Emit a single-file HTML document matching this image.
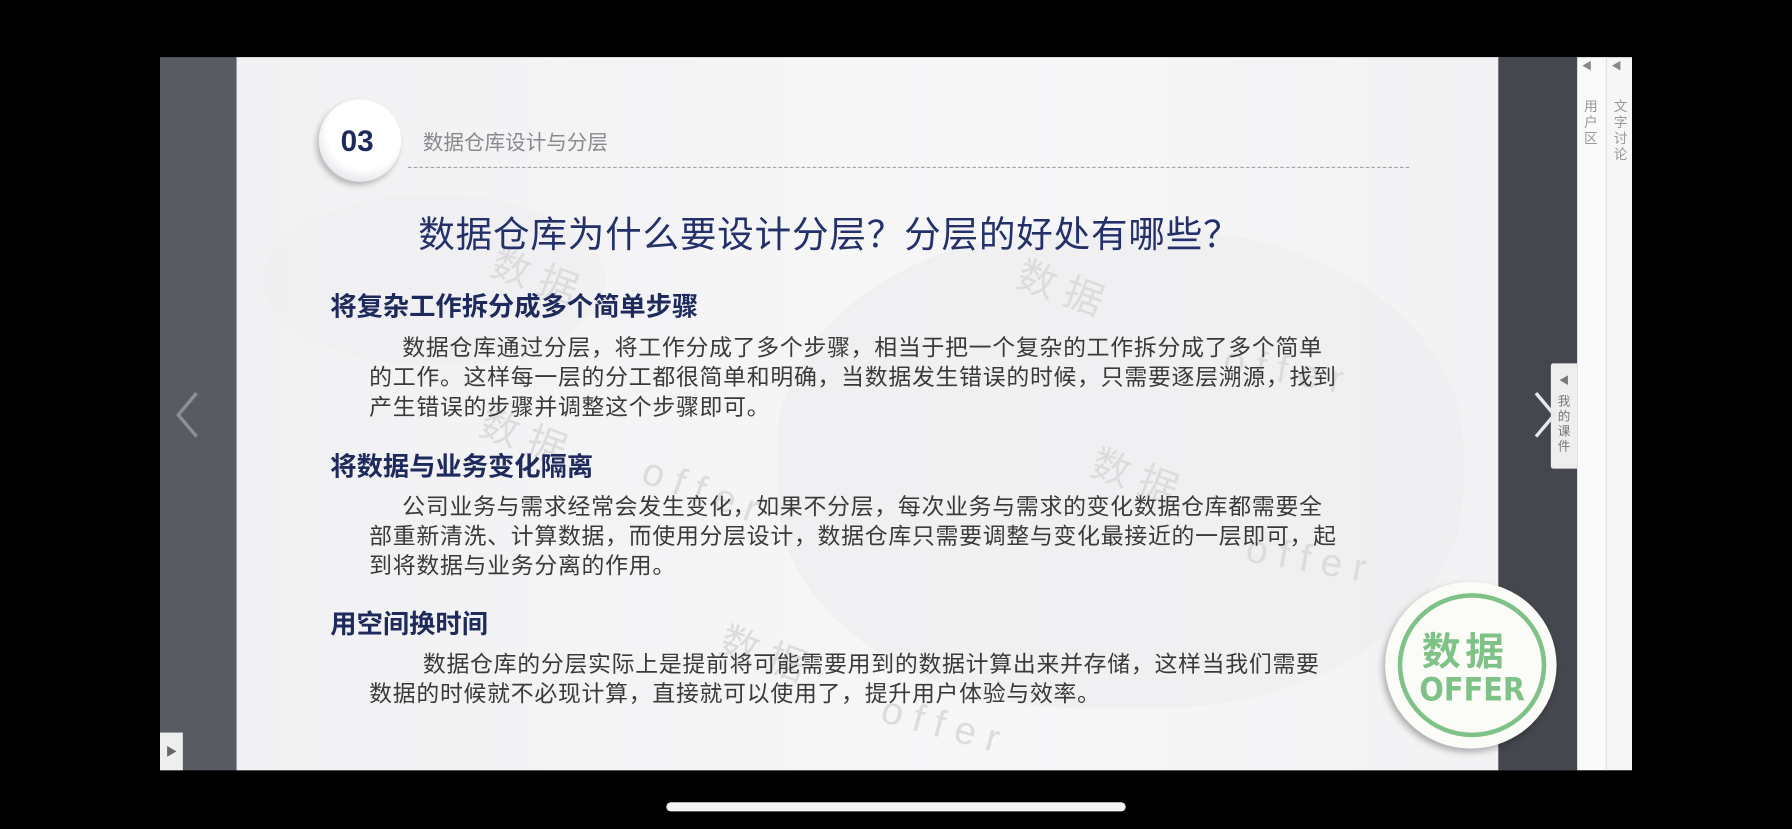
<!DOCTYPE html>
<html><head><meta charset="utf-8"><style>
html,body{margin:0;padding:0;background:#000;width:1792px;height:828px;overflow:hidden}
#w{position:absolute;left:0;top:0;width:1568px;height:725px;transform:scale(1.142857);transform-origin:0 0;font-family:"Liberation Sans","Noto Sans CJK SC",sans-serif}
.a{position:absolute;white-space:nowrap}
.b{font-size:20px;color:#3a3a3a;line-height:26px;letter-spacing:0.65px}
.h{font-size:23px;font-weight:bold;color:#1f2a5c}
.wm{position:absolute;color:#dcdcde;font-size:34px;white-space:nowrap}
</style></head><body><div id="w">
<div class="a" style="left:140px;top:50px;width:1240px;height:624px;background:#595b63"></div>
<div class="a" style="left:1311px;top:50px;width:69px;height:624px;background:#45474f"></div>
<div class="a" style="left:207px;top:50px;width:1104px;height:624px;background:linear-gradient(90deg,#f1f1f3,#f7f7f8 60%,#f2f2f4)"></div>
<div class="a" style="left:680px;top:200px;width:600px;height:420px;border-radius:45%;background:#ededef;opacity:.6"></div>
<div class="a" style="left:230px;top:170px;width:300px;height:150px;border-radius:50%;background:#eeeef0;opacity:.6"></div>
<div class="a" style="left:1380px;top:50px;width:25px;height:624px;background:#fafafa;border-right:1px solid #e4e4e4"></div>
<div class="a" style="left:1406px;top:50px;width:22px;height:624px;background:#f6f6f6"></div>
<div class="a" style="left:1386px;top:86px;width:14px;font-size:12px;line-height:14px;color:#999;white-space:normal">用户区</div>
<div class="a" style="left:1412px;top:86px;width:14px;font-size:12px;line-height:14px;color:#999;white-space:normal">文字讨论</div>
<div class="a" style="left:1384px;top:51px;font-size:9px;color:#888">◀</div>
<div class="a" style="left:1410px;top:51px;font-size:9px;color:#888">◀</div>
<div class="a" style="left:1357px;top:318px;width:23px;height:92px;background:#eeeeef;border-radius:2px 0 0 2px"></div>
<div class="a" style="left:1364px;top:326px;font-size:9px;color:#777">◀</div>
<div class="a" style="left:1363px;top:346px;width:12px;font-size:11px;line-height:13px;color:#777;white-space:normal">我的课件</div>
<div class="a" style="left:140px;top:641px;width:20px;height:33px;background:#eee"></div>
<div class="a" style="left:145px;top:649px;font-size:10px;color:#666">▶</div>
<svg class="a" style="left:150px;top:340px" width="30" height="46"><path d="M22 4 L6 23 L22 42" stroke="#8d8f96" stroke-width="3" fill="none"/></svg>
<svg class="a" style="left:1336px;top:340px" width="30" height="46"><path d="M8 4 L24 23 L8 42" stroke="#e8e8ea" stroke-width="3" fill="none"/></svg>
<div class="wm" style="left:430px;top:215px;transform:rotate(20deg)">数 据</div>
<div class="wm" style="left:890px;top:225px;transform:rotate(20deg)">数 据</div>
<div class="wm" style="left:420px;top:355px;transform:rotate(20deg)">数 据</div>
<div class="wm" style="left:955px;top:390px;transform:rotate(20deg)">数 据</div>
<div class="wm" style="left:630px;top:545px;transform:rotate(20deg)">数 据</div>
<div class="wm" style="left:560px;top:410px;transform:rotate(20deg)">o f f e r</div>
<div class="wm" style="left:1070px;top:305px;transform:rotate(10deg)">o f f e r</div>
<div class="wm" style="left:1090px;top:470px;transform:rotate(10deg)">o f f e r</div>
<div class="wm" style="left:770px;top:615px;transform:rotate(15deg)">o f f e r</div>
<div class="a" style="left:279px;top:87px;width:72px;height:72px;border-radius:50%;background:radial-gradient(circle at 55% 40%,#fff 55%,#e2e3e8 80%,#c8c9d0);box-shadow:-2px 3px 5px rgba(0,0,0,.25)"></div>
<div class="a" style="left:298px;top:108px;font-size:26px;font-weight:bold;color:#1f2a5c">03</div>
<div class="a" style="left:370px;top:111px;font-size:18px;color:#8a8a8e">数据仓库设计与分层</div>
<div class="a" style="left:357px;top:146px;width:876px;border-top:1px dashed #a5a5a8"></div>
<div class="a" style="left:366px;top:180px;font-size:32px;color:#24306a;letter-spacing:0.7px">数据仓库为什么要设计分层？分层的好处有哪些？</div>
<div class="a h" style="left:289px;top:249px">将复杂工作拆分成多个简单步骤</div>
<div class="a b" style="left:352px;top:292px">数据仓库通过分层，将工作分成了多个步骤，相当于把一个复杂的工作拆分成了多个简单</div>
<div class="a b" style="left:323px;top:318px">的工作。这样每一层的分工都很简单和明确，当数据发生错误的时候，只需要逐层溯源，找到</div>
<div class="a b" style="left:323px;top:344px">产生错误的步骤并调整这个步骤即可。</div>
<div class="a h" style="left:289px;top:389px">将数据与业务变化隔离</div>
<div class="a b" style="left:352px;top:431px">公司业务与需求经常会发生变化，如果不分层，每次业务与需求的变化数据仓库都需要全</div>
<div class="a b" style="left:323px;top:457px">部重新清洗、计算数据，而使用分层设计，数据仓库只需要调整与变化最接近的一层即可，起</div>
<div class="a b" style="left:323px;top:483px">到将数据与业务分离的作用。</div>
<div class="a h" style="left:289px;top:527px">用空间换时间</div>
<div class="a b" style="left:370px;top:569px">数据仓库的分层实际上是提前将可能需要用到的数据计算出来并存储，这样当我们需要</div>
<div class="a b" style="left:323px;top:595px">数据的时候就不必现计算，直接就可以使用了，提升用户体验与效率。</div>
<div class="a" style="left:1212px;top:509px;width:150px;height:146px;border-radius:50%;background:#fbfbf7;box-shadow:-2px 3px 6px rgba(0,0,0,.3)"></div>
<div class="a" style="left:1223px;top:519px;width:122px;height:118px;border-radius:50%;border:4px solid #7fc287"></div>
<div class="a" style="left:1244px;top:543px;font-size:34px;font-weight:bold;color:#7fc287;letter-spacing:4px">数据</div>
<div class="a" style="left:1242px;top:587px;font-size:28px;font-weight:bold;color:#7fc287;font-family:'DejaVu Sans Condensed','Liberation Sans Narrow','Liberation Sans',sans-serif">OFFER</div>
<div class="a" style="left:583px;top:702px;width:402px;height:8px;border-radius:4px;background:#f2f2f2"></div>
</div></body></html>
